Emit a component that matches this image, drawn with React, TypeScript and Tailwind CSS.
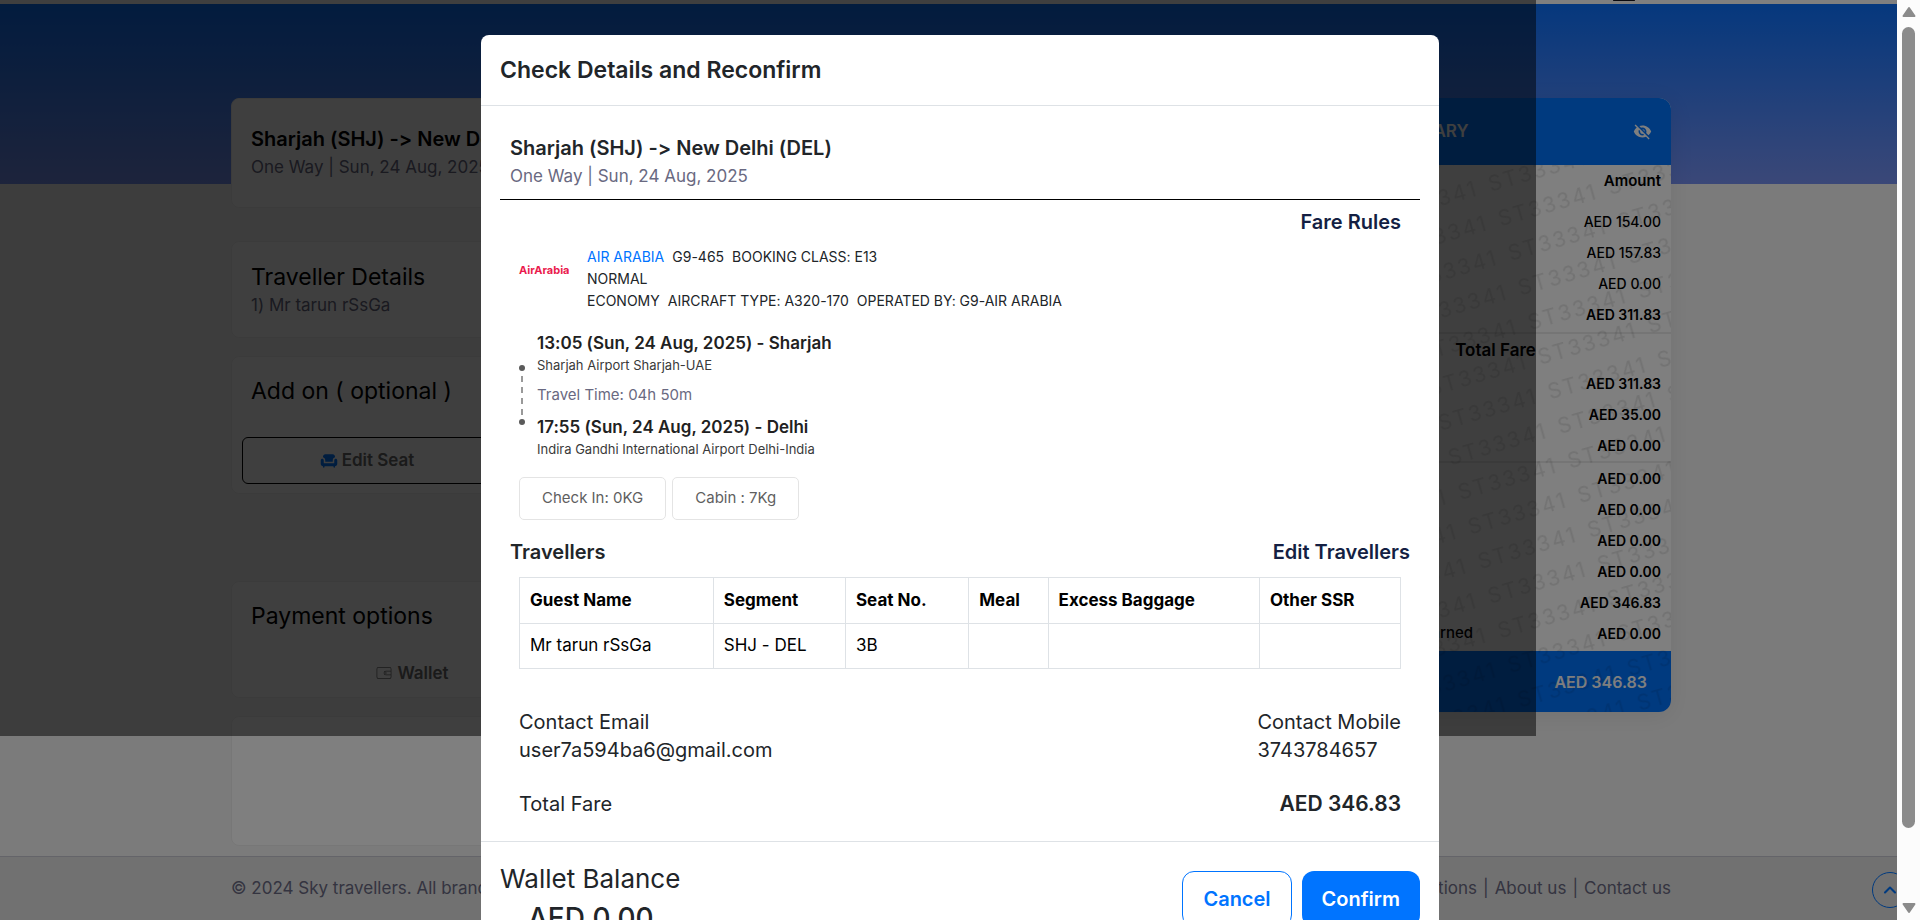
import type { ReactNode } from "react";
import { MdChair, MdVisibilityOff } from "react-icons/md";
import { CiWallet } from "react-icons/ci";
import { ChevronUp } from "lucide-react";

type FareRow = { label: string; amount: string; strong?: boolean };

const baseFare: FareRow[] = [
  { label: "Base Fare", amount: "AED 154.00" },
  { label: "Taxes", amount: "AED 157.83" },
  { label: "Other Charges", amount: "AED 0.00" },
  { label: "Total", amount: "AED 311.83", strong: true },
];

const totals: FareRow[] = [
  { label: "Fare", amount: "AED 311.83", strong: true },
  { label: "Seat", amount: "AED 35.00", strong: true },
  { label: "Meal", amount: "AED 0.00", strong: true },
];

const adjustments: FareRow[] = [
  { label: "Baggage", amount: "AED 0.00", strong: true },
  { label: "Service Fee", amount: "AED 0.00", strong: true },
  { label: "Discount", amount: "AED 0.00", strong: true },
  { label: "VAT", amount: "AED 0.00", strong: true },
  { label: "Net Payable", amount: "AED 346.83", strong: true },
  { label: "Commission earned", amount: "AED 0.00", strong: true },
];

const columns = [
  { title: "Guest Name", value: "Mr tarun rSsGa", width: "w-[22%]" },
  { title: "Segment", value: "SHJ - DEL", width: "w-[15%]" },
  { title: "Seat No.", value: "3B", width: "w-[14%]" },
  { title: "Meal", value: "", width: "w-[9%]" },
  { title: "Excess Baggage", value: "", width: "w-[24%]" },
  { title: "Other SSR", value: "", width: "w-[16%]" },
];

function Card({ className, children }: { className: string; children?: ReactNode }) {
  return (
    <section className={`rounded-lg border border-[#efefef] bg-white px-[19px] ${className}`}>
      {children}
    </section>
  );
}

function FareLine({ label, amount, strong }: FareRow) {
  return (
    <div className="flex h-[31px] items-center justify-between px-[10px] text-[14px]">
      <span className="text-[15px] font-medium">{label}</span>
      <span className={strong ? "font-semibold" : "font-medium"}>{amount}</span>
    </div>
  );
}

function Watermark() {
  return (
    <svg aria-hidden="true" className="pointer-events-none absolute inset-0 size-full">
      <defs>
        <pattern
          id="agent-code"
          width="114"
          height="36"
          patternUnits="userSpaceOnUse"
          patternTransform="translate(163 0) rotate(-16)"
        >
          <text x="0" y="28" className="fill-black/10 text-[21px] tracking-widest">ST33341</text>
        </pattern>
      </defs>
      <rect width="100%" height="100%" fill="url(#agent-code)" />
    </svg>
  );
}

function FareSummary() {
  return (
    <aside className="w-[351px] self-start rounded-xl bg-white text-black shadow-[0_4px_24px_rgba(0,0,0,0.08)]">
      <div className="flex h-[67px] items-center justify-between rounded-t-xl bg-[#0074ff] pl-3 pr-[19px] text-white">
        <h2 className="text-[17px] font-semibold">FARE SUMMARY</h2>
        <button type="button" aria-label="Hide fare summary">
          <MdVisibilityOff className="size-[19px]" />
        </button>
      </div>
      <div className="relative overflow-hidden rounded-b-xl">
        <div className="flex h-8 items-center justify-between px-[10px] text-[15px] font-semibold">
          <span>Type</span>
          <span>Amount</span>
        </div>
        <div className="border-b-2 border-[#eaeaea] pb-[2px] pt-[9px]">
          {baseFare.map((row) => <FareLine key={row.label} {...row} />)}
        </div>
        <div className="border-b-2 border-[#eaeaea]">
          <p className="flex h-[34px] items-center justify-center text-[17px] font-semibold">Total Fare</p>
          {totals.map((row) => <FareLine key={row.label} {...row} />)}
        </div>
        <div className="pb-[2px]">
          {adjustments.map((row) => <FareLine key={row.label} {...row} />)}
        </div>
        <div className="flex h-[61px] items-center justify-between bg-[#0074ff] px-6 text-[16px] font-semibold text-white">
          <span>Total</span>
          <span>AED 346.83</span>
        </div>
        <Watermark />
      </div>
    </aside>
  );
}

function BookingPage() {
  return (
    <div className="flex h-full flex-col bg-[#f7f7f7]">
      <header className="flex h-1 shrink-0 items-start justify-end bg-white">
        <span className="mr-[285px] h-px w-[22px] rounded-full bg-[#14141f]" />
      </header>
      <main className="flex-1 bg-[linear-gradient(180deg,#0b70fb,#7690f0)] bg-[length:100%_180px] bg-no-repeat pt-[94px] pr-[18px]">
        <div className="mx-auto flex max-w-[1440px] justify-between">
          <div className="w-[1070px]">
            <Card className="h-[110px] pt-[25px]">
              <h2 className="text-[20px] font-semibold leading-[30px] text-black">Sharjah (SHJ) -&gt; New Delhi (DEL)</h2>
              <p className="text-[17px] leading-[26px] text-[#696981]">One Way | Sun, 24 Aug, 2025</p>
            </Card>
            <Card className="mt-[33px] h-[97px] pt-5">
              <h2 className="text-[23px] leading-[30px] text-black">Traveller Details</h2>
              <p className="text-[17px] leading-[26px] text-[#696981]">1) Mr tarun rSsGa</p>
            </Card>
            <Card className="mt-[18px] h-[138px] pt-[19px]">
              <h2 className="text-[23px] leading-[30px] text-black">Add on ( optional )</h2>
              <button
                type="button"
                className="-ml-[9px] mt-[31px] flex h-[47px] w-[250px] items-center justify-center gap-1 rounded-md border border-black text-[17px] font-semibold text-[#6a6a6a]"
              >
                <MdChair className="size-[18px] text-[#0074ff]" />
                Edit Seat
              </button>
            </Card>
            <Card className="mt-[87px] h-[117px] pt-[19px]">
              <h2 className="text-[23px] leading-[30px] text-black">Payment options</h2>
              <button
                type="button"
                className="mt-[27px] flex w-[322px] items-center justify-center gap-1 text-[17px] font-semibold leading-[30px] text-[#6a6a6a]"
              >
                <CiWallet className="size-[18px]" />
                Wallet
              </button>
            </Card>
            <Card className="mt-[18px] h-[130px]" />
          </div>
          <FareSummary />
        </div>
      </main>
      <footer className="h-16 shrink-0 border-t border-[#c9c9d3] bg-[#e2e2e2] pr-[18px] text-[17px] text-[#696981]">
        <div className="mx-auto flex h-full max-w-[1440px] items-center justify-between">
          <p>© 2024 Sky travellers. All brands are trademarks of their owners.</p>
          <nav className="flex gap-[6px]">
            <a href="#terms">Terms and Conditions</a>
            <span>|</span>
            <a href="#about">About us</a>
            <span>|</span>
            <a href="#contact">Contact us</a>
          </nav>
        </div>
      </footer>
      <button
        type="button"
        aria-label="Back to top"
        className="absolute bottom-3 right-3 flex size-9 items-center justify-center rounded-full border border-[#0074ff] text-[#0074ff]"
      >
        <ChevronUp className="size-5" strokeWidth={2.5} />
      </button>
    </div>
  );
}

function Leg({ time, airport }: { time: string; airport: string }) {
  return (
    <div>
      <p className="text-[17px] font-semibold leading-6 text-[#212121]">{time}</p>
      <p className="text-[13px] leading-5 text-[#3a3a3a]">{airport}</p>
    </div>
  );
}

function ConfirmDialog() {
  return (
    <div
      role="dialog"
      aria-labelledby="dialog-title"
      className="w-[958px] rounded-lg bg-white text-[#212529]"
    >
      <div className="flex h-[71px] items-center border-b border-[#dee2e6] px-[19px]">
        <h1 id="dialog-title" className="text-[23px] font-semibold">Check Details and Reconfirm</h1>
      </div>

      <div className="border-b border-[#dee2e6] px-[19px] pb-[21px] pt-[27px]">
        <div className="border-b border-black px-[10px] pb-[10px]">
          <h2 className="text-[20px] font-semibold leading-[30px]">Sharjah (SHJ) -&gt; New Delhi (DEL)</h2>
          <p className="text-[17px] leading-[26px] text-[#696981]">One Way | Sun, 24 Aug, 2025</p>
        </div>

        <div className="px-[19px]">
          <div className="flex justify-end pt-[7px]">
            <a href="#fare-rules" className="text-[20px] font-semibold leading-[30px] text-[#141f43]">Fare Rules</a>
          </div>

          <div className="mt-[9px] flex items-start">
            <span className="mt-4 w-[68px] text-[11px] font-bold leading-4 text-[#ea1b4d]">AirArabia</span>
            <div className="text-[14px] leading-[22px]">
              <p className="flex gap-2">
                <a href="#air-arabia" className="text-[#0074ff]">AIR ARABIA</a>
                <span>G9-465</span>
                <span>BOOKING CLASS: E13</span>
              </p>
              <p>NORMAL</p>
              <p className="flex gap-2">
                <span>ECONOMY</span>
                <span>AIRCRAFT TYPE: A320-170</span>
                <span>OPERATED BY: G9-AIR ARABIA</span>
              </p>
            </div>
          </div>

          <div className="mt-[19px] flex items-center gap-3">
            <svg className="h-[60px] w-[6px]" viewBox="0 0 6 60" aria-hidden="true">
              <circle cx="3" cy="3" r="3" fill="#5a5a5a" />
              <path d="M3 11V50" stroke="#999" strokeWidth="2" strokeDasharray="6 5" />
              <circle cx="3" cy="57" r="3" fill="#5a5a5a" />
            </svg>
            <div>
              <Leg time="13:05 (Sun, 24 Aug, 2025) - Sharjah" airport="Sharjah Airport Sharjah-UAE" />
              <p className="py-[9px] text-[15px] leading-[22px] text-[#696981]">Travel Time: 04h 50m</p>
              <Leg time="17:55 (Sun, 24 Aug, 2025) - Delhi" airport="Indira Gandhi International Airport Delhi-India" />
            </div>
          </div>

          <div className="mt-[18px] flex gap-[6px] text-[15px] text-[#5f5f5f]">
            <span className="flex h-[43px] items-center rounded-[5px] border border-[#e4e4e4] px-[22px]">Check In: 0KG</span>
            <span className="flex h-[43px] items-center rounded-[5px] border border-[#e4e4e4] px-[22px]">Cabin : 7Kg</span>
          </div>
        </div>

        <div className="mt-[17px] flex items-center justify-between px-[10px] text-[20px] font-semibold leading-[30px]">
          <h2>Travellers</h2>
          <a href="#edit-travellers" className="text-[#141f43]">Edit Travellers</a>
        </div>

        <div className="px-[19px]">
          <table className="mt-[10px] w-full table-fixed border-collapse text-left text-[17px] text-black">
            <thead>
              <tr className="h-[46px]">
                {columns.map((c) => (
                  <th key={c.title} scope="col" className={`border border-[#dee2e6] px-[10px] font-bold ${c.width}`}>{c.title}</th>
                ))}
              </tr>
            </thead>
            <tbody>
              <tr className="h-[45px]">
                {columns.map((c) => (
                  <td key={c.title} className="border border-[#dee2e6] px-[10px]">{c.value}</td>
                ))}
              </tr>
            </tbody>
          </table>

          <div className="mt-[39px] flex justify-between text-[20px] leading-7">
            <div>
              <p>Contact Email</p>
              <p>user7a594ba6@gmail.com</p>
            </div>
            <div>
              <p>Contact Mobile</p>
              <p>3743784657</p>
            </div>
          </div>

          <div className="mt-6 flex items-center justify-between text-[20px] leading-8">
            <p>Total Fare</p>
            <p className="text-[21px] font-semibold">AED 346.83</p>
          </div>
        </div>
      </div>

      <div className="flex items-start justify-between px-[19px] py-5">
        <div>
          <p className="text-[26px] leading-[34px]">Wallet Balance</p>
          <p className="pl-7 text-[28px] font-medium leading-[44px]">AED 0.00</p>
        </div>
        <div className="flex gap-[10px] pt-[9px] text-[20px] font-semibold">
          <button type="button" className="h-14 rounded-xl border border-[#0074ff] px-5 text-[#0074ff]">Cancel</button>
          <button type="button" className="h-14 rounded-xl bg-[#0074ff] px-5 text-white">Confirm</button>
        </div>
      </div>
    </div>
  );
}

function ScrollBar() {
  return (
    <div aria-hidden="true" className="absolute inset-y-0 right-0 flex w-[23px] flex-col items-center bg-[#fcfcfc] py-[6px]">
      <svg className="h-3 w-[14px]" viewBox="0 0 14 12">
        <path d="M7 2 12.500 10H1.500Z" fill="#8b8b8b" stroke="#8b8b8b" strokeWidth="2" strokeLinejoin="round" />
      </svg>
      <div className="mt-[9px] h-[801px] w-[13px] rounded-full bg-[#8b8b8b]" />
      <svg className="mt-auto h-3 w-[14px]" viewBox="0 0 14 12">
        <path d="M7 10 12.500 2H1.500Z" fill="#8b8b8b" stroke="#8b8b8b" strokeWidth="2" strokeLinejoin="round" />
      </svg>
    </div>
  );
}

export default function App() {
  return (
    <div className="relative h-screen overflow-hidden font-['Inter',sans-serif] [font-feature-settings:'calt'_0]">
      <BookingPage />
      <div className="absolute left-0 top-0 h-4/5 w-4/5 bg-black/50" />
      <div className="absolute inset-0 flex items-start justify-center bg-black/50 pt-[35px]">
        <ConfirmDialog />
      </div>
      <ScrollBar />
    </div>
  );
}
